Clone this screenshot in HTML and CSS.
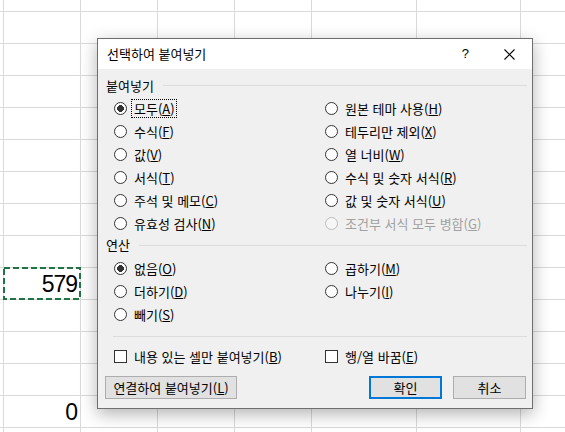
FILE: index.html
```html
<!DOCTYPE html>
<html lang="ko">
<head>
<meta charset="utf-8">
<title>선택하여 붙여넣기</title>
<link rel="stylesheet" href="styles.css">
</head>
<body>
<div class="sheet">
  <div class="cell copied">
    <svg class="ants" width="79" height="34" viewBox="0 0 79 34"><rect x="1" y="1" width="76" height="31" fill="none" stroke="#217346" stroke-width="2" stroke-dasharray="6 3"/></svg>
    <span class="num">579</span>
  </div>
  <div class="cell zero"><span class="num">0</span></div>
</div>

<div class="dialog">
  <div class="titlebar">
    <span class="title">선택하여 붙여넣기</span>
    <span class="help">?</span>
    <svg class="close" width="11" height="11" viewBox="0 0 11 11"><path d="M0.5 0.5L10.5 10.5M10.5 0.5L0.5 10.5" stroke="#000" stroke-width="1.1" fill="none"/></svg>
  </div>
  <div class="dlg-body">
    <div class="group-head"><span>붙여넣기</span><i class="rule"></i></div>
    <div class="options">
      <div class="opt"><span class="radio on"></span><span class="txt focus">모두(<u>A</u>)</span></div>
      <div class="opt"><span class="radio"></span><span class="txt">원본 테마 사용(<u>H</u>)</span></div>
      <div class="opt"><span class="radio"></span><span class="txt">수식(<u>F</u>)</span></div>
      <div class="opt"><span class="radio"></span><span class="txt">테두리만 제외(<u>X</u>)</span></div>
      <div class="opt"><span class="radio"></span><span class="txt">값(<u>V</u>)</span></div>
      <div class="opt"><span class="radio"></span><span class="txt">열 너비(<u>W</u>)</span></div>
      <div class="opt"><span class="radio"></span><span class="txt">서식(<u>T</u>)</span></div>
      <div class="opt"><span class="radio"></span><span class="txt">수식 및 숫자 서식(<u>R</u>)</span></div>
      <div class="opt"><span class="radio"></span><span class="txt">주석 및 메모(<u>C</u>)</span></div>
      <div class="opt"><span class="radio"></span><span class="txt">값 및 숫자 서식(<u>U</u>)</span></div>
      <div class="opt"><span class="radio"></span><span class="txt">유효성 검사(<u>N</u>)</span></div>
      <div class="opt disabled"><span class="radio"></span><span class="txt">조건부 서식 모두 병합(<u>G</u>)</span></div>
    </div>
    <div class="group-head short"><span>연산</span><i class="rule"></i></div>
    <div class="options ops">
      <div class="opt"><span class="radio on"></span><span class="txt">없음(<u>O</u>)</span></div>
      <div class="opt"><span class="radio"></span><span class="txt">곱하기(<u>M</u>)</span></div>
      <div class="opt"><span class="radio"></span><span class="txt">더하기(<u>D</u>)</span></div>
      <div class="opt"><span class="radio"></span><span class="txt">나누기(<u>I</u>)</span></div>
      <div class="opt"><span class="radio"></span><span class="txt">빼기(<u>S</u>)</span></div>
    </div>
    <div class="sep"></div>
    <div class="options checks">
      <div class="opt"><span class="check"></span><span class="txt">내용 있는 셀만 붙여넣기(<u>B</u>)</span></div>
      <div class="opt"><span class="check"></span><span class="txt">행/열 바꿈(<u>E</u>)</span></div>
    </div>
    <div class="buttons">
      <span class="btn link">연결하여 붙여넣기(<u>L</u>)</span>
      <span class="btn ok">확인</span>
      <span class="btn cancel">취소</span>
    </div>
  </div>
</div>
</body>
</html>
```

FILE: styles.css
```css
html, body {
  margin: 0;
  padding: 0;
  background: #fff;
}

.sheet {
  width: 565px;
  height: 432px;
  overflow: hidden;
  display: grid;
  grid-template-columns: 3px 77px 77px 77px 77px 105px 104px 1fr;
  grid-template-rows: 11px repeat(13, 32px) 1fr;
  background-color: #fff;
  background-image:
    repeating-linear-gradient(to bottom, #dadada 0 1px, transparent 1px 32px),
    linear-gradient(#dadada, #dadada),
    linear-gradient(#dadada, #dadada),
    linear-gradient(#dadada, #dadada),
    linear-gradient(#dadada, #dadada),
    linear-gradient(#dadada, #dadada),
    linear-gradient(#dadada, #dadada),
    linear-gradient(#dadada, #dadada);
  background-size: 100% 100%, 1px 100%, 1px 100%, 1px 100%, 1px 100%, 1px 100%, 1px 100%, 1px 100%;
  background-position: 0 11px, 3px 0, 80px 0, 157px 0, 234px 0, 311px 0, 416px 0, 520px 0;
  background-repeat: repeat, no-repeat, no-repeat, no-repeat, no-repeat, no-repeat, no-repeat, no-repeat;
  font-family: "Liberation Sans", Arial, sans-serif;
}

.cell {
  position: relative;
  grid-column: 2;
  display: flex;
  justify-content: flex-end;
  align-items: flex-end;
  padding: 0 3px 3px 0;
}

.copied { grid-row: 10; }
.zero { grid-row: 14; }

.num {
  font-size: 23px;
  line-height: 23px;
  letter-spacing: -1px;
  color: #000;
}

.ants {
  position: absolute;
  left: 0;
  top: 0;
}

.dialog {
  position: absolute;
  left: 97px;
  top: 38px;
  width: 436px;
  box-sizing: border-box;
  border: 1px solid #6f6f6f;
  background: #f0f0f0;
  box-shadow: 0 5px 16px rgba(0, 0, 0, 0.3);
  font-family: "Noto Sans CJK KR", "Malgun Gothic", sans-serif;
  font-size: 13px;
  color: #000;
}

.titlebar {
  height: 30px;
  background: #fff;
  display: flex;
  align-items: center;
  padding-left: 9px;
}

.title {
  flex: 1;
  line-height: 16px;
}

.help {
  font-family: "Liberation Sans", Arial, sans-serif;
  font-size: 13px;
  line-height: 16px;
  margin-right: 35px;
}

.close {
  margin-right: 17px;
}

.dlg-body {
  padding: 5px 5px 9px 8px;
}

.group-head {
  display: flex;
  align-items: center;
  height: 23px;
  line-height: 16px;
}

.group-head.short {
  height: 20px;
}

.rule {
  flex: 1;
  height: 1px;
  background: #dcdcdc;
  margin-left: 9px;
}

.options {
  display: grid;
  grid-template-columns: 211px 1fr;
  grid-auto-rows: 23px;
  padding-left: 8px;
}

.ops {
  margin-top: 2px;
}

.opt {
  display: flex;
  align-items: center;
}

.radio {
  width: 13px;
  height: 13px;
  box-sizing: border-box;
  border: 1px solid #333;
  border-radius: 50%;
  background: #fff;
  margin-right: 4px;
  flex: none;
}

.radio.on {
  background: radial-gradient(circle, #333 0 3.3px, #fff 3.6px);
}

.txt {
  border: 1px dotted transparent;
  padding: 0 1px 0 2px;
  line-height: 17px;
  white-space: nowrap;
}

.txt.focus {
  border-color: #000;
}

.txt u {
  text-underline-offset: 1px;
}

.disabled .radio {
  border-color: #bcbcbc;
  background: #f6f6f6;
}

.disabled .txt {
  color: #a0a0a0;
}

.sep {
  height: 1px;
  background: #dcdcdc;
  margin: 10px 0 0 7px;
}

.checks {
  margin-top: 8px;
  grid-auto-rows: 22px;
}

.check {
  width: 13px;
  height: 13px;
  box-sizing: border-box;
  border: 1px solid #333;
  background: #fff;
  margin-right: 4px;
  flex: none;
}

.buttons {
  display: flex;
  margin: 9px 1px 0 -1px;
}

.btn {
  height: 23px;
  box-sizing: border-box;
  border: 1px solid #adadad;
  background: #e1e1e1;
  display: flex;
  align-items: center;
  justify-content: center;
  line-height: 16px;
}

.link {
  width: 132px;
}

.ok {
  width: 73px;
  margin-left: auto;
  border: 2px solid #0078d7;
}

.cancel {
  width: 73px;
  margin-left: 11px;
}
```
